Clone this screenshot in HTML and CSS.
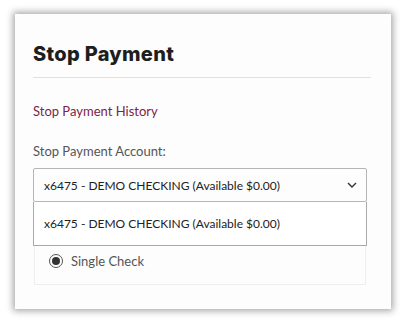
FILE: index.html
```html
<!DOCTYPE html>
<html lang="en">

<head>
    <meta charset="UTF-8">
    <meta name="viewport" content="width=device-width, initial-scale=1.0">
    <title>Stop Payment</title>
    <link rel="stylesheet" href="styles.css">
</head>

<body>
    <div class="card">
        <h1 class="title">Stop Payment</h1>
        <hr class="divider">

        <a class="history-link" href="#">Stop Payment History</a>

        <div class="field">
            <div class="field-label">Stop Payment Account:</div>
            <div class="select-wrap">
                <div class="select">
                    <span>x6475 - DEMO CHECKING (Available $0.00)</span>
                    <svg class="chevron" width="10" height="6" viewBox="0 0 10 6">
                        <path d="M1 1 L5 5 L9 1" fill="none" stroke="#333" stroke-width="1.4" />
                    </svg>
                </div>
                <!-- opened list, lies over the options box -->
                <div class="dropdown">
                    <div class="dropdown-item">x6475 - DEMO CHECKING (Available $0.00)</div>
                </div>
            </div>
        </div>

        <div class="options">
            <label class="radioItem">
                <span class="radio"></span>
                Single Check
            </label>
        </div>
    </div>
</body>

</html>
```

FILE: styles.css
```css
body {
    margin: 0;
    background-color: #ffffff;
    font-family: 'Lato', 'Liberation Sans', sans-serif;
    color: #333333;
}

.card {
    margin: 14px 15px;
    width: 376px;
    height: 295px;
    box-sizing: border-box;
    padding: 27px 20px 0 18px;
    background-color: #fdfdfd;
    box-shadow: 0 0 7px 2px rgba(0, 0, 0, 0.35);
}

.title {
    margin: 0;
    font-family: 'Inter', sans-serif;
    font-weight: 800;
    font-size: 20px;
    letter-spacing: 0.3px;
    line-height: 26px;
    color: #1e1e1e;
}

.divider {
    margin: 10px 0 0;
    height: 0;
    border: none;
    border-top: 1px solid #e2e2e2;
}

.history-link {
    display: block;
    margin-top: 24px;
    font-size: 13px;
    line-height: 18px;
    color: #7d2346;
    text-decoration: none;
}

.field {
    margin-top: 22px;
    width: 334px;
}

.field-label {
    font-size: 13px;
    line-height: 18px;
    color: #555555;
}

.select-wrap {
    position: relative;
    margin-top: 8px;
}

.select {
    display: flex;
    align-items: center;
    justify-content: space-between;
    height: 34px;
    box-sizing: border-box;
    padding: 0 10px;
    border: 1px solid #b5b5b5;
    border-radius: 2px;
    font-size: 12px;
    color: #222222;
}

.chevron {
    margin-right: -1px;
}

.dropdown {
    position: absolute;
    top: 34px;
    left: 0;
    right: 0;
    height: 44px;
    box-sizing: border-box;
    border: 1px solid #a9a9a9;
    border-top: none;
    background-color: #ffffff;
    display: flex;
    align-items: center;
    padding: 0 10px;
}

.dropdown-item {
    font-size: 12px;
    color: #222222;
}

.options {
    margin-left: 1px;
    width: 332px;
    height: 83px;
    box-sizing: border-box;
    padding: 0 14px 16px;
    border: 1px solid #efefef;
    border-top: none;
    display: flex;
    align-items: flex-end;
}

.radioItem {
    display: inline-flex;
    align-items: center;
    column-gap: 8px;
    font-size: 13px;
    line-height: 14px;
    color: #555555;
}

.radio {
    width: 14px;
    height: 14px;
    box-sizing: border-box;
    border: 1.5px solid #555555;
    border-radius: 50%;
    display: flex;
    align-items: center;
    justify-content: center;
}

.radio::after {
    content: "";
    width: 8px;
    height: 8px;
    border-radius: 50%;
    background-color: #333333;
}
```
